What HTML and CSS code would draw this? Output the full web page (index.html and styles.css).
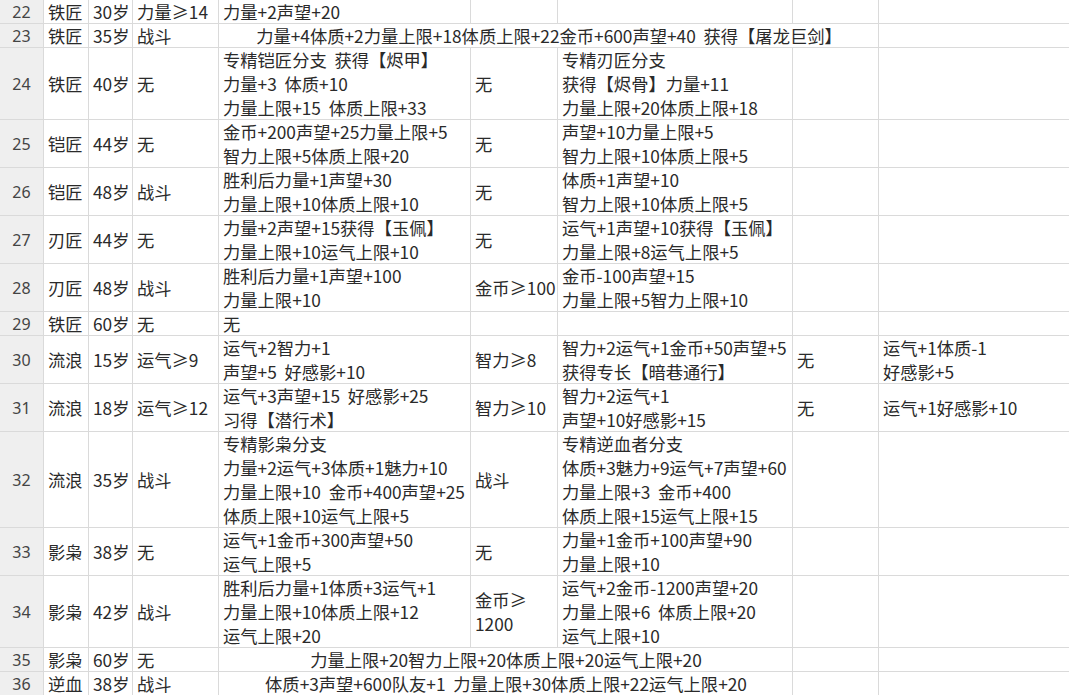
FILE: index.html
```html
<!DOCTYPE html>
<html lang="zh-CN">
<head>
<meta charset="utf-8">
<title>表格</title>
<link rel="stylesheet" href="styles.css">
</head>
<body>
<div class="sheet">
  <div class="rh">22</div><div class="c">铁匠</div><div class="c">30岁</div><div class="c">力量≥14</div><div class="c">力量+2声望+20</div><div class="c"></div><div class="c"></div><div class="c"></div><div class="c"></div>

  <div class="rh">23</div><div class="c">铁匠</div><div class="c">35岁</div><div class="c">战斗</div><div class="c m span4">力量+4体质+2力量上限+18体质上限+22金币+600声望+40  获得【屠龙巨剑】</div><div class="c"></div>

  <div class="rh">24</div><div class="c">铁匠</div><div class="c">40岁</div><div class="c">无</div><div class="c"><div>专精铠匠分支  获得【烬甲】</div><div>力量+3  体质+10</div><div>力量上限+15  体质上限+33</div></div><div class="c">无</div><div class="c"><div>专精刃匠分支</div><div>获得【烬骨】力量+11</div><div>力量上限+20体质上限+18</div></div><div class="c"></div><div class="c"></div>

  <div class="rh">25</div><div class="c">铠匠</div><div class="c">44岁</div><div class="c">无</div><div class="c"><div>金币+200声望+25力量上限+5</div><div>智力上限+5体质上限+20</div></div><div class="c">无</div><div class="c"><div>声望+10力量上限+5</div><div>智力上限+10体质上限+5</div></div><div class="c"></div><div class="c"></div>

  <div class="rh">26</div><div class="c">铠匠</div><div class="c">48岁</div><div class="c">战斗</div><div class="c"><div>胜利后力量+1声望+30</div><div>力量上限+10体质上限+10</div></div><div class="c">无</div><div class="c"><div>体质+1声望+10</div><div>智力上限+10体质上限+5</div></div><div class="c"></div><div class="c"></div>

  <div class="rh">27</div><div class="c">刃匠</div><div class="c">44岁</div><div class="c">无</div><div class="c"><div>力量+2声望+15获得【玉佩】</div><div>力量上限+10运气上限+10</div></div><div class="c">无</div><div class="c"><div>运气+1声望+10获得【玉佩】</div><div>力量上限+8运气上限+5</div></div><div class="c"></div><div class="c"></div>

  <div class="rh">28</div><div class="c">刃匠</div><div class="c">48岁</div><div class="c">战斗</div><div class="c"><div>胜利后力量+1声望+100</div><div>力量上限+10</div></div><div class="c">金币≥100</div><div class="c"><div>金币-100声望+15</div><div>力量上限+5智力上限+10</div></div><div class="c"></div><div class="c"></div>

  <div class="rh">29</div><div class="c">铁匠</div><div class="c">60岁</div><div class="c">无</div><div class="c">无</div><div class="c"></div><div class="c"></div><div class="c"></div><div class="c"></div>

  <div class="rh">30</div><div class="c">流浪</div><div class="c">15岁</div><div class="c">运气≥9</div><div class="c"><div>运气+2智力+1</div><div>声望+5  好感影+10</div></div><div class="c">智力≥8</div><div class="c"><div>智力+2运气+1金币+50声望+5</div><div>获得专长【暗巷通行】</div></div><div class="c">无</div><div class="c"><div>运气+1体质-1</div><div>好感影+5</div></div>

  <div class="rh">31</div><div class="c">流浪</div><div class="c">18岁</div><div class="c">运气≥12</div><div class="c"><div>运气+3声望+15  好感影+25</div><div>习得【潜行术】</div></div><div class="c">智力≥10</div><div class="c"><div>智力+2运气+1</div><div>声望+10好感影+15</div></div><div class="c">无</div><div class="c">运气+1好感影+10</div>

  <div class="rh">32</div><div class="c">流浪</div><div class="c">35岁</div><div class="c">战斗</div><div class="c"><div>专精影枭分支</div><div>力量+2运气+3体质+1魅力+10</div><div>力量上限+10  金币+400声望+25</div><div>体质上限+10运气上限+5</div></div><div class="c">战斗</div><div class="c"><div>专精逆血者分支</div><div>体质+3魅力+9运气+7声望+60</div><div>力量上限+3  金币+400</div><div>体质上限+15运气上限+15</div></div><div class="c"></div><div class="c"></div>

  <div class="rh">33</div><div class="c">影枭</div><div class="c">38岁</div><div class="c">无</div><div class="c"><div>运气+1金币+300声望+50</div><div>运气上限+5</div></div><div class="c">无</div><div class="c"><div>力量+1金币+100声望+90</div><div>力量上限+10</div></div><div class="c"></div><div class="c"></div>

  <div class="rh">34</div><div class="c">影枭</div><div class="c">42岁</div><div class="c">战斗</div><div class="c"><div>胜利后力量+1体质+3运气+1</div><div>力量上限+10体质上限+12</div><div>运气上限+20</div></div><div class="c"><div>金币≥</div><div>1200</div></div><div class="c"><div>运气+2金币-1200声望+20</div><div>力量上限+6  体质上限+20</div><div>运气上限+10</div></div><div class="c"></div><div class="c"></div>

  <div class="rh">35</div><div class="c">影枭</div><div class="c">60岁</div><div class="c">无</div><div class="c m span3">力量上限+20智力上限+20体质上限+20运气上限+20</div><div class="c"></div><div class="c"></div>

  <div class="rh">36</div><div class="c">逆血</div><div class="c">38岁</div><div class="c">战斗</div><div class="c m span3">体质+3声望+600队友+1  力量上限+30体质上限+22运气上限+20</div><div class="c"></div><div class="c"></div>
</div>
</body>
</html>
```

FILE: styles.css
```css
html, body {
  margin: 0;
  padding: 0;
  background: #ffffff;
  overflow: hidden;
}

body {
  width: 1069px;
  height: 695px;
}

.sheet {
  display: grid;
  grid-template-columns: 43px 44px 43px 85px 251px 86px 234px 85px 1fr;
  grid-template-rows: 23px 23px 71px 47px 47px 47px 47px 23px 47px 47px 95px 47px 71px 23px 23px;
  gap: 1px;
  background: #dadada;
  font-family: "Noto Sans CJK SC", sans-serif;
  font-size: 17.3px;
  color: #2a2a2a;
}

.c {
  background: #ffffff;
  display: flex;
  flex-direction: column;
  justify-content: center;
  align-items: flex-start;
  padding: 0 3px 0 4px;
  line-height: 24px;
  white-space: pre;
  overflow: visible;
  min-width: 0;
}

.rh {
  background: #efefef;
  display: flex;
  align-items: center;
  justify-content: center;
  font-family: "Noto Sans", "Liberation Sans", sans-serif;
  font-size: 16px;
  color: #444444;
  line-height: 24px;
}

.m {
  align-items: center;
}

.span4 {
  grid-column: span 4;
}

.span3 {
  grid-column: span 3;
}
```
